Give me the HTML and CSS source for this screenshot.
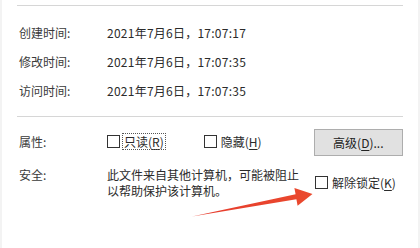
FILE: index.html
```html
<!DOCTYPE html>
<html lang="zh-CN">
<head>
<meta charset="utf-8">
<title>属性</title>
<link rel="stylesheet" href="styles.css">
</head>
<body>
<div class="page">
  <div class="sep"></div>
  <div class="times">
    <div class="row"><span class="label">创建时间:</span><span class="value">2021年7月6日，17:07:17</span></div>
    <div class="row"><span class="label">修改时间:</span><span class="value">2021年7月6日，17:07:35</span></div>
    <div class="row"><span class="label">访问时间:</span><span class="value">2021年7月6日，17:07:35</span></div>
  </div>
  <div class="sep"></div>
  <div class="attrs">
    <span class="label">属性:</span>
    <div class="checks">
      <label class="check"><span class="box"></span><span class="ctext focus">只读(<u>R</u>)</span></label>
      <label class="check hidden-opt"><span class="box"></span><span class="ctext">隐藏(<u>H</u>)</span></label>
    </div>
    <button class="btn">高级(<u>D</u>)...</button>
  </div>
  <div class="security">
    <span class="label">安全:</span>
    <p class="note">此文件来自其他计算机，可能被阻止<br>以帮助保护该计算机。</p>
    <label class="check unblock"><span class="box"></span><span class="ctext">解除锁定(<u>K</u>)</span></label>
  </div>
  <svg class="arrow" width="420" height="248" viewBox="0 0 420 248" aria-hidden="true">
    <defs>
      <linearGradient id="ag" x1="0" y1="0" x2="1" y2="0">
        <stop offset="0" stop-color="#e63a2c"/>
        <stop offset="1" stop-color="#ea4a2e"/>
      </linearGradient>
    </defs>
    <polygon points="192,216.5 295.6,194.3 294.4,188 312.5,194 297.6,205.8 296.4,199.2" fill="url(#ag)"/>
  </svg>
</div>
</body>
</html>
```
FILE: styles.css
```css
* { box-sizing: border-box; }
html, body { margin: 0; padding: 0; background: #fff; }
body {
  font-family: "Noto Sans CJK SC", "Noto Sans", sans-serif;
  font-size: 12px;
  color: #2b2b2b;
}
.page {
  position: relative;
  width: 420px;
  height: 248px;
  padding: 5px 17px 0 17px;
  border-left: 2px solid #f3f3f3;
  border-right: 2px solid #f3f3f3;
  overflow: hidden;
}
.sep {
  height: 1px;
  width: 386px;
  margin-left: -2px;
  background: #d6d6d6;
}
.times { padding: 12px 0 11px; }
.row {
  display: flex;
  height: 29px;
  align-items: center;
}
.label {
  width: 88px;
  flex: none;
  color: #3a3a3a;
}
.value { color: #2b2b2b; letter-spacing: 0.25px; }
.attrs {
  display: flex;
  align-items: center;
  height: 27px;
  margin-top: 11px;
}
.checks {
  display: flex;
  align-items: center;
  width: 208px;
}
.check {
  display: flex;
  align-items: center;
}
.box {
  width: 13px;
  height: 13px;
  border: 1px solid #333;
  background: #fff;
  flex: none;
  margin-right: 3px;
}
.ctext { line-height: 15px; padding: 0 1px; }
.ctext u { text-decoration-thickness: 1px; text-underline-offset: 2px; }
.focus { outline: 1px dotted #555; outline-offset: 0; }
.hidden-opt { margin-left: 39px; }
.btn {
  width: 90px;
  height: 27px;
  margin-left: auto;
  margin-right: -2px;
  background: #e1e1e1;
  border: 1px solid #adadad;
  font: inherit;
  color: #222;
  padding: 0;
  margin-top: 1px;
}
.btn u { text-underline-offset: 2px; }
.security {
  display: flex;
  align-items: flex-start;
  margin-top: 12px;
}
.security .label { line-height: 16px; }
.note {
  margin: 0;
  line-height: 16px;
  width: 208px;
}
.unblock { margin-top: 8px; }
.arrow {
  position: absolute;
  left: -2px;
  top: 0;
}
```
